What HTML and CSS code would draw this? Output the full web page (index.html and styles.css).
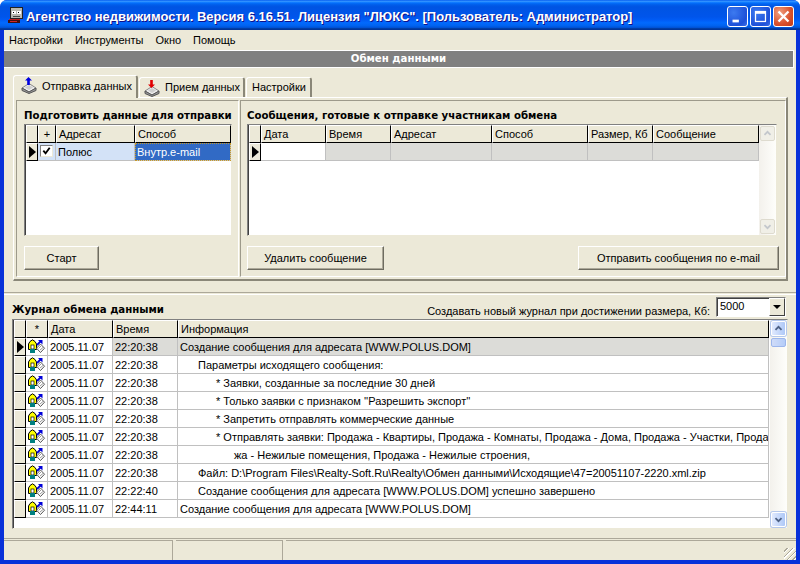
FILE: index.html
```html
<!DOCTYPE html>
<html lang="ru">
<head>
    <meta charset="UTF-8">
    <title>Агентство недвижимости</title>
    <link rel="stylesheet" href="styles.css">
</head>
<body>
    <svg class="defs" width="0" height="0">
        <symbol id="log-icon" viewBox="0 0 20 16">
            <path d="M1.5 10.5 V5 L3 2.5 L5.5 .8 L8 2.5 L9.5 5 V10.5 Z" fill="#ffff00" stroke="#000"/>
            <rect x="4" y="6" width="3" height="4" fill="#fff" stroke="#000" stroke-width=".7"/>
            <rect x="3" y="10" width="5" height="4" fill="#008080"/>
            <path d="M10 6 L14 2" stroke="#0000d8" stroke-width="1.8"/>
            <path d="M11 1 H15.5 V5.5 Z" fill="#0000d8"/>
            <path d="M13.5 5 L17.5 9.2 L13.5 13.5 L9.5 9.2 Z" fill="#fff" stroke="#555"/>
            <path d="M11.5 9.5 L14 7 M13 11 L16 8.5" stroke="#999"/>
        </symbol>
        <symbol id="disk" viewBox="0 0 16 12">
            <path d="M1 6 L8 1.5 L15 6 L8 10 Z" fill="#eeeeee" stroke="#888"/>
            <path d="M1 6 V8.5 L8 11.5 L15 8.5 V6 L8 10 Z" fill="#999" stroke="#555"/>
            <path d="M4 5.5 L8 3 L12 5.5 L8 8 Z" fill="#cfcfcf"/>
        </symbol>
    </svg>

    <div class="window">
        <div class="titlebar">
            <svg class="app-icon" viewBox="0 0 18 18" width="18" height="18" shape-rendering="crispEdges">
                <rect x="3.5" y=".5" width="12" height="11" fill="#b8b8b0" stroke="#222"/>
                <rect x="5" y="4" width="4" height="3" fill="#fff"/>
                <rect x="10" y="4" width="4" height="3" fill="#fff"/>
                <rect x="6" y="5" width="1" height="1" fill="#000"/>
                <rect x="11" y="5" width="1" height="1" fill="#000"/>
                <rect x="6" y="9" width="7" height="1" fill="#444"/>
                <rect x="2" y="12" width="11" height="1" fill="#c02020"/>
                <rect x="1" y="13" width="12" height="3" fill="#401010"/>
                <rect x="3" y="14" width="7" height="1" fill="#d02828"/>
            </svg>
            <span class="title-text">Агентство недвижимости. Версия 6.16.51. Лицензия "ЛЮКС". [Пользователь: Администратор]</span>
            <div class="title-buttons">
                <button class="win-btn"><svg viewBox="0 0 21 21"><rect x="5" y="14" width="7" height="3" fill="#fff"/></svg></button>
                <button class="win-btn"><svg viewBox="0 0 21 21"><rect x="5" y="5" width="11" height="11" fill="none" stroke="#fff" stroke-width="1.4"/><rect x="5" y="5" width="11" height="2.5" fill="#fff"/></svg></button>
                <button class="win-btn win-close"><svg viewBox="0 0 21 21"><path d="M5 5 L16 16 M16 5 L5 16" stroke="#fff" stroke-width="2.6"/></svg></button>
            </div>
        </div>

        <div class="client">
            <div class="menu">
                <span>Настройки</span>
                <span>Инструменты</span>
                <span>Окно</span>
                <span>Помощь</span>
            </div>
            <div class="band">Обмен данными</div>

            <div class="upper">
                <div class="tabs">
                    <div class="tab active"><svg class="tab-icon"><use href="#disk"/></svg><svg class="tab-arrow" viewBox="0 0 8 9"><path d="M4 0 L8 4 L5.5 4 L5.5 9 L2.5 9 L2.5 4 L0 4 Z" fill="#0000e0"/></svg>Отправка данных</div>
                    <div class="tab tab-two"><svg class="tab-icon"><use href="#disk"/></svg><svg class="tab-arrow" viewBox="0 0 8 9"><path d="M4 9 L8 5 L5.5 5 L5.5 0 L2.5 0 L2.5 5 L0 5 Z" fill="#e00000"/></svg>Прием данных</div>
                    <div class="tab tab-three">Настройки</div>
                </div>
                <div class="page">
                    <div class="pane pane-left">
                        <h3 class="pane-title">Подготовить данные для отправки</h3>
                        <div class="grid grid-prepare">
                            <div class="row head">
                                <div class="cell"></div>
                                <div class="cell center">+</div>
                                <div class="cell">Адресат</div>
                                <div class="cell">Способ</div>
                            </div>
                            <div class="row">
                                <div class="cell ind"><i class="arrow"></i></div>
                                <div class="cell sel center"><span class="check"><svg viewBox="0 0 11 11"><path d="M2 5 L4.5 8 L9 2" fill="none" stroke="#000" stroke-width="2"/></svg></span></div>
                                <div class="cell sel">Полюс</div>
                                <div class="cell focus">Внутр.e-mail</div>
                            </div>
                        </div>
                        <div class="pane-actions">
                            <button class="btn btn-start">Старт</button>
                        </div>
                    </div>
                    <div class="pane pane-right">
                        <h3 class="pane-title">Сообщения, готовые к отправке участникам обмена</h3>
                        <div class="grid grid-ready">
                            <div class="grid-body">
                                <div class="row head">
                                    <div class="cell"></div>
                                    <div class="cell">Дата</div>
                                    <div class="cell">Время</div>
                                    <div class="cell">Адресат</div>
                                    <div class="cell">Способ</div>
                                    <div class="cell">Размер, Кб</div>
                                    <div class="cell">Сообщение</div>
                                </div>
                                <div class="row">
                                    <div class="cell ind"><i class="arrow"></i></div>
                                    <div class="cell"></div>
                                    <div class="cell gray"></div>
                                    <div class="cell gray"></div>
                                    <div class="cell gray"></div>
                                    <div class="cell gray"></div>
                                    <div class="cell gray"></div>
                                </div>
                            </div>
                            <div class="scroll scroll-off">
                                <div class="sb-btn"><svg viewBox="0 0 15 15"><path d="M4 9 L7.5 5.5 L11 9" fill="none" stroke="#c3c7cc" stroke-width="2"/></svg></div>
                                <div class="sb-btn"><svg viewBox="0 0 15 15"><path d="M4 6 L7.5 9.5 L11 6" fill="none" stroke="#c3c7cc" stroke-width="2"/></svg></div>
                            </div>
                        </div>
                        <div class="pane-actions spread">
                            <button class="btn btn-delete">Удалить сообщение</button>
                            <button class="btn btn-send">Отправить сообщения по e-mail</button>
                        </div>
                    </div>
                </div>
            </div>

            <div class="splitter"></div>

            <div class="log-head">
                <h3 class="pane-title">Журнал обмена данными</h3>
                <div class="log-size">
                    <span>Создавать новый журнал при достижении размера, Кб:</span>
                    <div class="combo"><span class="combo-val">5000</span><span class="combo-btn"><i></i></span></div>
                </div>
            </div>

            <div class="grid grid-log">
                <div class="grid-body">
                    <div class="row head">
                        <div class="cell"></div>
                        <div class="cell center">*</div>
                        <div class="cell">Дата</div>
                        <div class="cell">Время</div>
                        <div class="cell">Информация</div>
                    </div>
                    <div class="row">
                        <div class="cell ind"><i class="arrow"></i></div>
                        <div class="cell icon"><svg><use href="#log-icon"/></svg></div>
                        <div class="cell">2005.11.07</div>
                        <div class="cell gray">22:20:38</div>
                        <div class="cell gray">Создание сообщения для адресата [WWW.POLUS.DOM]</div>
                    </div>
                    <div class="row">
                        <div class="cell ind"></div>
                        <div class="cell icon"><svg><use href="#log-icon"/></svg></div>
                        <div class="cell">2005.11.07</div>
                        <div class="cell">22:20:38</div>
                        <div class="cell lvl1">Параметры исходящего сообщения:</div>
                    </div>
                    <div class="row">
                        <div class="cell ind"></div>
                        <div class="cell icon"><svg><use href="#log-icon"/></svg></div>
                        <div class="cell">2005.11.07</div>
                        <div class="cell">22:20:38</div>
                        <div class="cell lvl2">* Заявки, созданные за последние 30 дней</div>
                    </div>
                    <div class="row">
                        <div class="cell ind"></div>
                        <div class="cell icon"><svg><use href="#log-icon"/></svg></div>
                        <div class="cell">2005.11.07</div>
                        <div class="cell">22:20:38</div>
                        <div class="cell lvl2">* Только заявки с признаком ''Разрешить экспорт''</div>
                    </div>
                    <div class="row">
                        <div class="cell ind"></div>
                        <div class="cell icon"><svg><use href="#log-icon"/></svg></div>
                        <div class="cell">2005.11.07</div>
                        <div class="cell">22:20:38</div>
                        <div class="cell lvl2">* Запретить отправлять коммерческие данные</div>
                    </div>
                    <div class="row">
                        <div class="cell ind"></div>
                        <div class="cell icon"><svg><use href="#log-icon"/></svg></div>
                        <div class="cell">2005.11.07</div>
                        <div class="cell">22:20:38</div>
                        <div class="cell lvl2">* Отправлять заявки: Продажа - Квартиры, Продажа - Комнаты, Продажа - Дома, Продажа - Участки, Прода</div>
                    </div>
                    <div class="row">
                        <div class="cell ind"></div>
                        <div class="cell icon"><svg><use href="#log-icon"/></svg></div>
                        <div class="cell">2005.11.07</div>
                        <div class="cell">22:20:38</div>
                        <div class="cell lvl3">жа - Нежилые помещения, Продажа - Нежилые строения,</div>
                    </div>
                    <div class="row">
                        <div class="cell ind"></div>
                        <div class="cell icon"><svg><use href="#log-icon"/></svg></div>
                        <div class="cell">2005.11.07</div>
                        <div class="cell">22:20:38</div>
                        <div class="cell lvl1">Файл: D:\Program Files\Realty-Soft.Ru\Realty\Обмен данными\Исходящие\47=20051107-2220.xml.zip</div>
                    </div>
                    <div class="row">
                        <div class="cell ind"></div>
                        <div class="cell icon"><svg><use href="#log-icon"/></svg></div>
                        <div class="cell">2005.11.07</div>
                        <div class="cell">22:22:40</div>
                        <div class="cell lvl1">Создание сообщения для адресата [WWW.POLUS.DOM] успешно завершено</div>
                    </div>
                    <div class="row">
                        <div class="cell ind"></div>
                        <div class="cell icon"><svg><use href="#log-icon"/></svg></div>
                        <div class="cell">2005.11.07</div>
                        <div class="cell">22:44:11</div>
                        <div class="cell">Создание сообщения для адресата [WWW.POLUS.DOM]</div>
                    </div>
                </div>
                <div class="scroll scroll-on">
                    <div class="sb-btn"><svg viewBox="0 0 15 15"><path d="M4 9 L7.5 5.5 L11 9" fill="none" stroke="#4d6185" stroke-width="2"/></svg></div>
                    <div class="sb-thumb"></div>
                    <div class="sb-track"></div>
                    <div class="sb-btn"><svg viewBox="0 0 15 15"><path d="M4 6 L7.5 9.5 L11 6" fill="none" stroke="#4d6185" stroke-width="2"/></svg></div>
                </div>
            </div>

            <div class="status">
                <div class="status-cell s1"></div>
                <div class="status-cell s2"></div>
                <div class="status-cell s3"></div>
            </div>
        </div>
    </div>
</body>
</html>
```

FILE: styles.css
```css
* {
    box-sizing: border-box;
}
html, body {
    margin: 0;
    height: 100%;
    overflow: hidden;
}
body {
    font-family: "Liberation Sans", Arial, sans-serif;
    font-size: 11px;
    color: #000;
}
.defs {
    position: absolute;
}
.window {
    width: 800px;
    height: 564px;
    display: flex;
    flex-direction: column;
    background: #0831d9;
    border-radius: 7px 7px 0 0;
    overflow: hidden;
}

/* Заголовок окна */
.titlebar {
    height: 30px;
    flex: none;
    display: flex;
    align-items: center;
    padding: 0 6px 0 7px;
    background: linear-gradient(to bottom, #0058ee 0%, #3593ff 4%, #288eff 6%, #127dff 8%, #036ffc 10%, #0262ee 14%, #0057e5 20%, #0054e3 24%, #0055eb 56%, #005bf5 66%, #026afe 76%, #0062ef 86%, #0052d6 92%, #0040ab 94%, #003092 100%);
}
.app-icon {
    flex: none;
    margin: 2px 1px 0 0;
}
.title-text {
    flex: 1;
    margin-top: 3px;
    color: #fff;
    font-size: 13px;
    font-weight: bold;
    letter-spacing: -.03px;
    white-space: nowrap;
    text-shadow: 1px 1px 0 #0f1089;
}
.title-buttons {
    display: flex;
    gap: 2px;
    margin-top: 3px;
}
.win-btn {
    width: 21px;
    height: 21px;
    padding: 0;
    border: 1px solid #fff;
    border-radius: 3px;
    background: radial-gradient(circle at 30% 30%, #3c7af0, #1d50d8 70%, #3a6ee8);
}
.win-btn svg {
    display: block;
    width: 19px;
    height: 19px;
}
.win-close {
    background: radial-gradient(circle at 30% 30%, #f0a080, #d8502c 60%, #c03a18);
}

/* Рабочая область */
.client {
    flex: 1;
    margin: 0 4px 4px;
    background: #ece9d8;
    display: flex;
    flex-direction: column;
}
.menu {
    height: 20px;
    flex: none;
    display: flex;
    align-items: center;
    gap: 12px;
    padding-left: 5px;
}
.band {
    height: 18px;
    flex: none;
    margin: 0 2px 0 0;
    background: #808080;
    border-top: 1px solid #fff;
    border-bottom: 1px solid #fff;
    border-right: 1px solid #fff;
    color: #fff;
    font-family: "DejaVu Sans", sans-serif;
    font-size: 10.2px;
    font-weight: bold;
    text-align: center;
    line-height: 16px;
}
.upper {
    flex: none;
    padding: 7px 8px 0 9px;
    height: 213px;
}
.tabs {
    display: flex;
    height: 22px;
    align-items: flex-end;
}
.tab {
    position: relative;
    height: 20px;
    display: flex;
    align-items: center;
    padding: 0 0 1px 25px;
    margin-right: 1px;
    width: 106px;
    background: #ece9d8;
    border: 1px solid #fff;
    border-bottom: 0;
    border-right: 2px solid #8a8778;
    border-radius: 3px 3px 0 0;
    white-space: nowrap;
}
.tab.active {
    height: 23px;
    width: 125px;
    padding: 0 0 3px 28px;
    margin-bottom: -1px;
    z-index: 1;
}
.tab-three {
    width: 66px;
    padding-left: 5px;
}
.tab-icon {
    position: absolute;
    left: 4px;
    top: 7px;
    width: 16px;
    height: 12px;
}
.active .tab-icon {
    left: 7px;
    top: 6px;
}
.tab-arrow {
    position: absolute;
    left: 8px;
    top: 2px;
    width: 7px;
    height: 8px;
}
.active .tab-arrow {
    left: 11px;
    top: 1px;
}
.page {
    height: 184px;
    padding: 2px;
    display: flex;
    gap: 1px;
    background: #ece9d8;
    border: 1px solid #fff;
    border-right: 2px solid #8a8778;
    border-bottom: 2px solid #8a8778;
}
.pane {
    display: flex;
    flex-direction: column;
    border: 1px solid #9d9a8b;
    border-right-color: #fff;
    border-bottom-color: #fff;
}
.pane-left {
    width: 224px;
    padding: 8px 6px 0 7px;
}
.pane-right {
    flex: 1;
    padding: 8px 6px 0 6px;
}
.pane-title {
    margin: 0;
    font-size: 10.2px;
    line-height: 14px;
    font-family: "DejaVu Sans", sans-serif;
    font-weight: bold;
    white-space: nowrap;
}
.pane-actions {
    display: flex;
    margin-top: 10px;
}
.spread {
    justify-content: space-between;
}
.btn {
    height: 24px;
    padding: 0;
    background: #ece9d8;
    border: 1px solid;
    border-color: #fff #6e6c60 #6e6c60 #fff;
    box-shadow: inset -1px -1px 0 #aca899;
    font: 11px "Liberation Sans", Arial, sans-serif;
    color: #000;
}
.btn-start {
    width: 75px;
}
.btn-delete {
    width: 137px;
}
.btn-send {
    width: 201px;
}

/* Таблицы */
.grid {
    display: flex;
    background: #fff;
    border: 1px solid;
    border-color: #808080 #ece9d8 #ece9d8 #808080;
    box-shadow: inset 1px 0 0 #404040;
    padding: 0 0 0 1px;
    overflow: hidden;
}
.grid-body {
    flex: 1;
    min-width: 0;
}
.row {
    display: grid;
    height: 18px;
}
.grid-prepare {
    height: 112px;
    margin-top: 1px;
    display: block;
}
.grid-prepare .row {
    grid-template-columns: 12px 18px 79px 96px;
}
.grid-ready {
    height: 112px;
    margin: 1px 2px 0 0;
}
.grid-ready .row {
    grid-template-columns: 12px 65px 65px 101px 96px 65px 106px;
}
.grid-log {
    height: 210px;
    margin: 2px 8px 0;
}
.grid-log .row {
    grid-template-columns: 12px 22px 65px 65px 591px;
}
.cell {
    height: 18px;
    line-height: 18px;
    padding-left: 2px;
    white-space: nowrap;
    overflow: hidden;
    border-right: 1px solid #c0c0c0;
    border-bottom: 1px solid #c0c0c0;
}
.center {
    padding-left: 0;
    text-align: center;
}
.head .cell {
    background: #ece9d8;
    border-left: 1px solid #fff;
    border-top: 1px solid #fff;
    border-right: 1px solid #000;
    border-bottom: 1px solid #000;
    line-height: 16px;
}
.ind {
    background: #ece9d8;
    padding: 0;
    border-right: 1px solid #000;
    border-bottom: 1px solid #000;
    border-top: 1px solid #fff;
    border-left: 1px solid #fff;
    display: flex;
    align-items: center;
    justify-content: center;
}
.arrow {
    display: block;
    width: 0;
    height: 0;
    border-left: 7px solid #000;
    border-top: 6px solid transparent;
    border-bottom: 6px solid transparent;
}
.sel {
    background: #d3e2f7;
}
.focus {
    background: #316ac5;
    color: #fff;
    outline: 1px dotted #c59a2c;
    outline-offset: -1px;
}
.gray {
    background: #dcdcd8;
}
.check {
    display: inline-block;
    width: 13px;
    height: 12px;
    margin-top: 2px;
    background: #fff;
    border: 1px solid;
    border-color: #808080 #ece9d8 #ece9d8 #808080;
    vertical-align: top;
}
.check svg {
    display: block;
    width: 11px;
    height: 10px;
}
.icon {
    padding: 1px 0 0 1px;
}
.icon svg {
    display: block;
    width: 20px;
    height: 16px;
}
.lvl1 {
    padding-left: 20px;
}
.lvl2 {
    padding-left: 38px;
}
.lvl3 {
    padding-left: 56px;
}

/* Полосы прокрутки */
.scroll {
    flex: none;
    width: 17px;
    display: flex;
    flex-direction: column;
    justify-content: space-between;
    background: linear-gradient(to right, #f3f1ec, #fefefb);
    padding-top: 1px;
}
.sb-btn {
    height: 15px;
    flex: none;
    margin: 0 0 1px 1px;
    width: 15px;
    border-radius: 2px;
    border: 1px solid #fff;
}
.sb-btn svg {
    display: block;
    width: 13px;
    height: 13px;
}
.scroll-off .sb-btn {
    background: #f0efe7;
    border-color: #dedbcf;
}
.scroll-on .sb-btn {
    background: linear-gradient(to right, #e1eafe, #aec8f7);
    border-color: #fff;
    box-shadow: 0 0 0 1px #b5c8ec;
}
.sb-thumb {
    height: 9px;
    flex: none;
    margin: 1px 0 0 1px;
    width: 15px;
    background: linear-gradient(to right, #d0dcf8, #b4ccf8);
    border: 1px solid #9cb6ec;
    border-radius: 2px;
}
.sb-track {
    flex: 1;
}

/* Журнал */
.splitter {
    height: 3px;
    flex: none;
    margin-top: 11px;
    border-top: 1px solid #aca899;
    border-bottom: 1px solid #fff;
}
.log-head {
    height: 20px;
    flex: none;
    margin-top: 2px;
    padding: 0 10px 0 8px;
    display: flex;
    justify-content: space-between;
    align-items: flex-end;
}
.log-size {
    display: flex;
    align-items: flex-end;
    gap: 6px;
}
.combo {
    width: 70px;
    height: 20px;
    display: flex;
    background: #fff;
    border: 1px solid;
    border-color: #808080 #fff #fff #808080;
    box-shadow: inset 1px 1px 0 #404040;
}
.combo-val {
    flex: 1;
    padding: 2px 0 0 3px;
}
.combo-btn {
    width: 16px;
    display: flex;
    align-items: center;
    justify-content: center;
    background: #ece9d8;
    border: 1px solid;
    border-color: #fff #404040 #404040 #fff;
}
.combo-btn i {
    width: 0;
    height: 0;
    border-top: 4px solid #000;
    border-left: 4px solid transparent;
    border-right: 4px solid transparent;
}

/* Строка состояния */
.status {
    height: 22px;
    flex: none;
    margin-top: auto;
    padding-top: 1px;
    display: flex;
    gap: 3px;
    border-top: 1px solid #aca899;
}
.status-cell {
    height: 100%;
    border-top: 1px solid #aca899;
    border-right: 1px solid #aca899;
}
.s1 {
    width: 169px;
}
.s2 {
    width: 107px;
}
.s3 {
    flex: 1;
    border-right: 0;
    background: repeating-linear-gradient(135deg, transparent 0 2px, #aca899 2px 3px, #fff 3px 4px) right bottom / 12px 12px no-repeat;
}
```
